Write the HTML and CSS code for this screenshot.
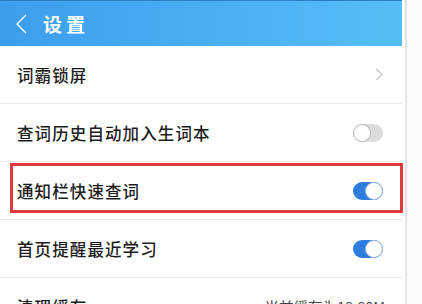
FILE: index.html
```html
<!doctype html>
<html lang="zh-CN">
  <head>
    <meta charset="UTF-8" />
    <title>设置</title>
    <link rel="stylesheet" href="styles.css">
  </head>
  <body>
    <div class="app">
      <div class="main">
        <div class="topbar">
          <svg class="back" width="12" height="20" viewBox="0 0 12 20">
            <path d="M11 1 L2 10 L11 19" fill="none" stroke="#fff" stroke-width="1.4" />
          </svg>
          <span class="title">设置</span>
        </div>

        <div class="row">
          <span class="label">词霸锁屏</span>
          <svg class="chevron" width="8" height="13" viewBox="0 0 8 13">
            <path d="M1 1 L7 6.5 L1 12" fill="none" stroke="#c4c4c4" stroke-width="1.2" />
          </svg>
        </div>
        <div class="row">
          <span class="label">查词历史自动加入生词本</span>
          <span class="toggle"></span>
        </div>
        <div class="row">
          <span class="label">通知栏快速查词</span>
          <span class="toggle on"></span>
        </div>
        <div class="row">
          <span class="label">首页提醒最近学习</span>
          <span class="toggle on"></span>
        </div>
        <div class="row">
          <span class="label">清理缓存</span>
          <span class="value">当前缓存为18.80M</span>
        </div>

        <!-- highlight drawn over the notification row -->
        <div class="highlight"></div>
      </div>
      <div class="rail"><div class="rail-line"></div></div>
    </div>
  </body>
</html>
```

FILE: styles.css
```css
body {
  margin: 0;
  padding: 0;
  font-family: "Noto Sans CJK SC", "Noto Sans", sans-serif;
  background: #fff;
  color: #1c1c1c;
  overflow: hidden;
}

.app {
  display: flex;
  width: 422px;
  height: 304px;
  overflow: hidden;
}

.main {
  position: relative;
  width: 402px;
  flex-shrink: 0;
  background: #fff;
}

/* Header bar */
.topbar {
  display: flex;
  align-items: center;
  height: 45px;
  padding-left: 15px;
  border-top: 1px solid #2d7fc4;
  background: linear-gradient(to right, #3c9dee, #54bff6);
}

.back {
  margin-top: 1px;
}

.title {
  margin-left: 16px;
  color: #fff;
  font-size: 19px;
  font-weight: 700;
  letter-spacing: 4px;
}

/* Setting rows */
.row {
  display: flex;
  align-items: center;
  justify-content: space-between;
  height: 57px;
  padding: 0 19px 0 17px;
  border-bottom: 1px solid #ebebeb;
}

.label {
  font-size: 16.5px;
  font-weight: 500;
  letter-spacing: 1.1px;
}

.value {
  font-size: 14.5px;
  color: #444;
  margin-right: -2px;
}

/* Switches */
.toggle {
  position: relative;
  width: 30px;
  height: 18px;
  border-radius: 9px;
  background: #dcdcdc;
}

.toggle::after {
  content: "";
  position: absolute;
  top: 0;
  left: 0;
  width: 16px;
  height: 16px;
  border-radius: 50%;
  background: #fff;
  border: 1px solid #b8b8b8;
}

.toggle.on {
  background: #2e7ddf;
}

.toggle.on::after {
  left: auto;
  right: 0;
  border-color: #9fb8d8;
}

/* Red highlight box */
.highlight {
  position: absolute;
  left: 10px;
  top: 163px;
  width: 387px;
  height: 44px;
  border: 3px solid #e23b3d;
}

/* Right scroll rail */
.rail {
  flex: 1;
  padding-left: 3px;
  background: #fff;
}

.rail-line {
  height: 100%;
  border-left: 2px solid #e4e4e4;
  background: #fbfbfb;
}
```
